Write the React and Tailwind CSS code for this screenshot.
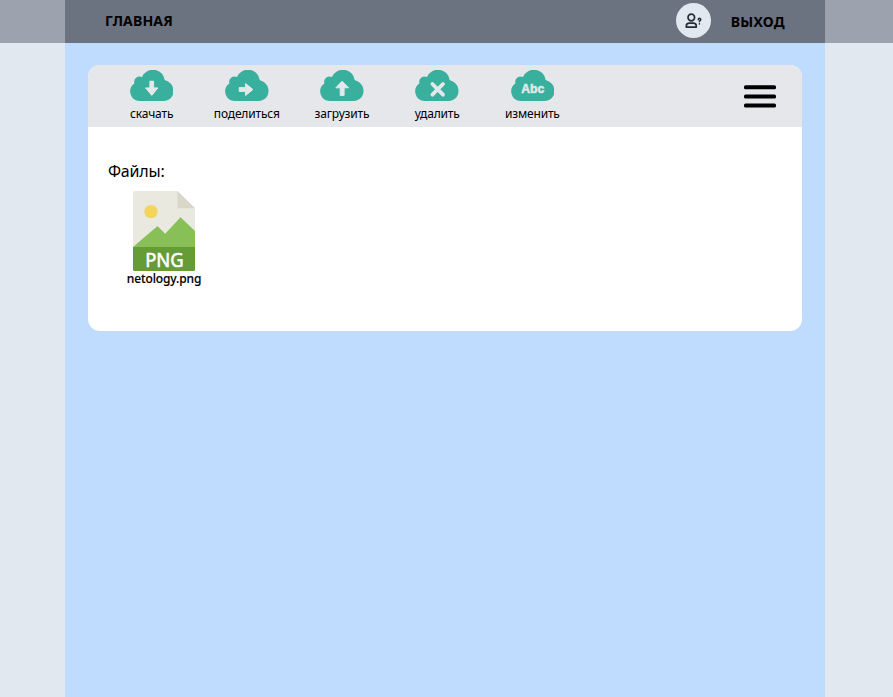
import React from 'react';

function Cloud({ children }) {
  return (
    <svg viewBox="0 0 43.5 31" className="block h-[31px] w-[43.5px]">
      <path
        fill="#38b09d"
        d="M9.6 31A9.6 9.6 0 0 1 4.4 13.5A5.5 5.5 0 0 1 12 7A11.9 11.9 0 0 1 34.8 10.3A10.6 10.6 0 0 1 33 31Z"
      />
      <path fill="#38b09d" d="M33.5 10.3C39.5 11 43.5 15.3 43.5 21C43.5 26.8 39.2 31 33 31Z" />
      {children}
    </svg>
  );
}

function Glyph({ kind }) {
  if (kind === 'down')
    return <path fill="#e5e7eb" stroke="#e5e7eb" strokeWidth="1" strokeLinejoin="round" d="M19.9 11.2H23.6V17.9H27.9L21.8 25.4L15.6 17.9H19.9Z" />;
  if (kind === 'right')
    return <path fill="#e5e7eb" stroke="#e5e7eb" strokeWidth="1" strokeLinejoin="round" d="M14.2 17.6H20.6V13.6L27.9 19.5L20.6 25.5V21.4H14.2Z" />;
  if (kind === 'up')
    return <path fill="#e5e7eb" stroke="#e5e7eb" strokeWidth="1" strokeLinejoin="round" d="M20.2 25.4V17.8H15.8L22.1 11.2L28.5 17.8H24.1V25.4Z" />;
  if (kind === 'cross')
    return <path fill="none" stroke="#e5e7eb" strokeWidth="3.8" strokeLinecap="round" d="M17.4 14L28 24.7M28 14L17.4 24.7" />;
  return (
    <text x="21.7" y="23.4" textAnchor="middle" textLength="23" lengthAdjust="spacingAndGlyphs" fill="#e5e7eb" stroke="#e5e7eb" strokeWidth=".5" className="font-['Liberation_Sans',sans-serif] text-[12px] font-bold">
      Abc
    </text>
  );
}

const actions = [
  { label: 'скачать', kind: 'down' },
  { label: 'поделиться', kind: 'right' },
  { label: 'загрузить', kind: 'up' },
  { label: 'удалить', kind: 'cross' },
  { label: 'изменить', kind: 'abc' },
];

function UserIcon() {
  return (
    <svg viewBox="0 0 18 16" className="h-4 w-[18px]" fill="none" stroke="#272d36" strokeWidth="1.7" strokeLinecap="round">
      <circle cx="7.3" cy="4.5" r="3.3" />
      <path strokeLinejoin="round" d="M2.3 14.1V13C2.3 11.2 3.7 10.2 5.4 10.2H9.2C10.9 10.2 12.3 11.2 12.3 13V14.1Z" />
      <path strokeWidth="1.6" d="M14.3 6.6C14.3 4.9 16.8 5 16.7 6.7C16.7 7.7 15.4 7.7 15.4 8.6M15.4 10.8V11" />
    </svg>
  );
}

function MenuIcon() {
  return (
    <svg viewBox="0 0 32 23" className="block h-[23px] w-8">
      <rect y="0.2" width="32" height="4.1" rx="1.5" />
      <rect y="9.4" width="32" height="4.1" rx="1.5" />
      <rect y="18.5" width="32" height="4.1" rx="1.5" />
    </svg>
  );
}

function PngFile() {
  return (
    <svg viewBox="0 0 62 80" className="block h-20 w-[62px] overflow-visible">
      <path fill="#e9e9e0" d="M1.5 0H44.5L62 17.2V58H0V1.5Q0 0 1.5 0Z" />
      <path fill="#d9d7ca" d="M44.5 0V17.2H62Z" />
      <circle cx="18" cy="20.6" r="6.7" fill="#f3d55b" />
      <path fill="#88c057" d="M0 56L24.5 35L32.2 42.7L47.5 26.3L62 40V57H0Z" />
      <path fill="#659c35" d="M0 56H62V78.5Q62 80 60.5 80H1.5Q0 80 0 78.5Z" />
      <g fill="#fff" stroke="#fff" strokeWidth=".6" className="font-['Noto_Sans',sans-serif] text-[19.5px] leading-none">
        <text x="31.4" y="75.5" textAnchor="middle" textLength="38.5" lengthAdjust="spacingAndGlyphs">
          PNG
        </text>
      </g>
    </svg>
  );
}

export default function App() {
  return (
    <div className="flex h-screen flex-col overflow-hidden bg-[#e1e8ef] font-['Noto_Sans',sans-serif] text-black">
      <header className="flex h-[43px] shrink-0 bg-[#9ca3af] pl-[65px]">
        <nav className="flex w-[760px] items-center justify-between bg-[#6b7280] px-10 pb-[2px] text-sm font-bold">
          <a className="tracking-[0.16px]">ГЛАВНАЯ</a>
          <div className="flex items-center gap-5">
            <div className="flex size-[35px] items-center justify-center rounded-full bg-[#e2e8f0]">
              <UserIcon />
            </div>
            <a className="pt-[2px] tracking-[0.3px]">ВЫХОД</a>
          </div>
        </nav>
      </header>
      <main className="ml-[65px] w-[760px] flex-1 bg-[#bfdbfe] px-[23px] pt-[22px]">
        <section className="h-[266px] overflow-hidden rounded-xl bg-white">
          <div className="flex h-[62px] justify-between bg-gray-200 pl-4 pr-[26px]">
            <div className="flex pt-[5px]">
              {actions.map((a) => (
                <button key={a.label} className="flex w-[95.2px] flex-col items-center">
                  <Cloud>
                    <Glyph kind={a.kind} />
                  </Cloud>
                  <span className="mt-[5px] text-xs leading-4 tracking-[-0.16px]">{a.label}</span>
                </button>
              ))}
            </div>
            <button className="flex items-start pt-5">
              <MenuIcon />
            </button>
          </div>
          <div className="px-5 pt-8">
            <h2 className="text-base leading-6 tracking-[-0.2px]">Файлы:</h2>
            <div className="mt-2 flex w-28 flex-col items-center">
              <PngFile />
              <span className="text-xs font-medium leading-4 tracking-[-0.12px] [-webkit-text-stroke:0.15px_black]">netology.png</span>
            </div>
          </div>
        </section>
      </main>
    </div>
  );
}
